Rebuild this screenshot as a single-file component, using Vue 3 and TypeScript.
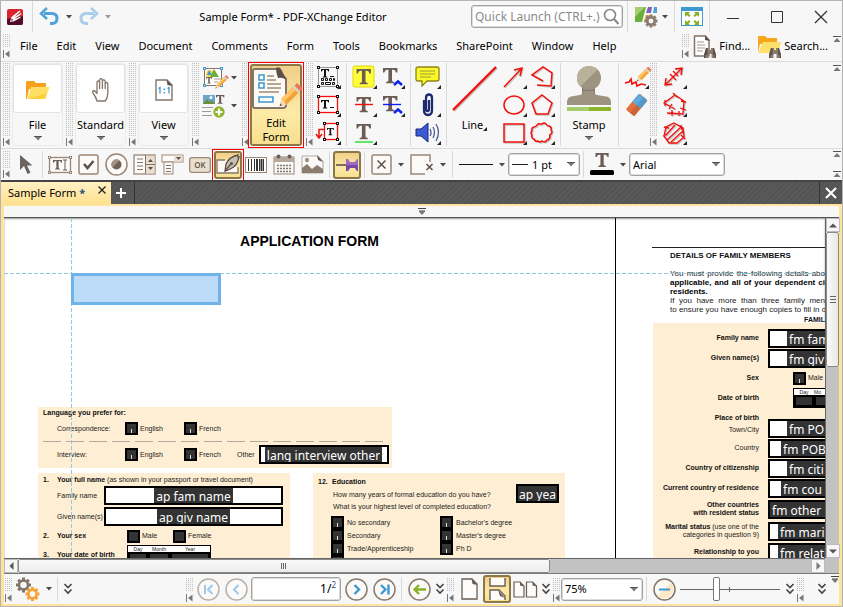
<script setup lang="ts">
import { h, ref } from 'vue'

type Glyph = [number, number, string]

const T = (x: number, y: number, s: number, c = '#6b5d55') =>
  `<path transform="translate(${x} ${y}) scale(${s})" fill="${c}" d="M0 0h16v5h-1.500q-.5-3-3-3h-1.500v12q0 1.500 2.500 1.500v1.500h-9v-1.500q2.500 0 2.500-1.500v-12h-1.500q-2.500 0-3 3h-1.500z"/>`
const corners = (x: number, y: number, X: number, Y: number, c = '#111') =>
  [[x, y], [X, y], [x, Y], [X, Y]].map(p => `<rect x="${p[0] - 1}" y="${p[1] - 1}" width="2" height="2" fill="#fff" stroke="${c}"/>`).join('')
const binoculars = (x: number, y: number) =>
  `<g transform="translate(${x} ${y})"><path fill="#8b7c70" d="M2 1h3v2h2v-2h3l2 7v3h-4.500v-4h-3v4h-4.500v-3z"/><path fill="#5d5048" d="M2 1h1.500v7h-2v3h-1.500v-3zM10 1h-1v7h1.500v3h1.500v-3z"/></g>`
const pencil = (t: string) =>
  `<g transform="${t}"><path fill="#f7a236" d="M4 0h5v14h-5z"/><path fill="#ffc766" d="M4 0h2.500v14h-2.500z"/><path fill="#e77a55" d="M4-4h5v3h-5z"/><path fill="#d8d3cc" d="M4-1h5v2h-5z"/><path fill="#f2dcae" d="M4 14h5l-2.500 5z"/><path fill="#7a5a3c" d="M5.600 17h1.800l-.9 2z"/></g>`
const gear = (x: number, y: number, r: number, c: string) => {
  let s = ''
  for (let a = 0; a < 360; a += 45) s += `<rect x="-1.500" y="${-r}" width="3" height="4" transform="rotate(${a})"/>`
  return `<g transform="translate(${x} ${y})" fill="${c}">${s}<circle r="${r * 0.6}" fill="none" stroke="${c}" stroke-width="${r * 0.34}"/></g>`
}
const box = '<rect x="1" y="1" width="19" height="19" rx="1.500" fill="#fbfaf8" stroke="#9b8776" stroke-width="1.500"/>'
const ring = (inner: string, c = '#8b7c6c') => `<circle cx="11.500" cy="11.500" r="10.500" fill="#fbfaf8" stroke="${c}" stroke-width="1.500"/>${inner}`
const red = (d: string, w = 1.5) =>
  `<path d="${d}" transform="translate(1 1)" fill="none" stroke="#000" stroke-opacity=".2" stroke-width="${w}"/><path d="${d}" fill="none" stroke="#f0100c" stroke-width="${w}"/>`

const glyphs: Record<string, Glyph> = {
  logo: [16, 16, '<rect width="16" height="16" rx="2" fill="#d9252c"/><path fill="#4f0b28" d="M0 10l16-3v7q0 2-2 2h-12q-2 0-2-2z"/><path fill="#fff" d="M3 13l1.500-5 8-6.500 1 1-7 6 7.500-4.500.5 1-7 5 6-2.500v1.200l-6.500 3.500z"/><path fill="#7b1530" d="M4.800 9.500l1.500 1.600-2.300 1z"/>'],
  undo: [21, 19, '<path d="M5 6.500h8q5 0 5 5t-5 5h-2" fill="none" stroke="#4ea3d8" stroke-width="3"/><path d="M8 1l-6 5.500 6 5.500" fill="none" stroke="#4ea3d8" stroke-width="2.500"/>'],
  redo: [21, 19, '<path d="M16 6.500h-8q-5 0-5 5t5 5h2" fill="none" stroke="#a9cdea" stroke-width="3"/><path d="M13 1l6 5.500-6 5.500" fill="none" stroke="#a9cdea" stroke-width="2.500"/>'],
  drop: [6, 4, '<path d="M0 0h6l-3 3.500z" fill="#4a4a4a"/>'],
  dropGrey: [6, 4, '<path d="M0 0h6l-3 3.500z" fill="#9a9a9a"/>'],
  wideDrop: [8, 5, '<path d="M.5 .5h7l-3.500 4z" fill="#777"/><path d="M0 .5h8" stroke="#555"/>'],
  gripEnd: [7, 8, '<path d="M.5 0v8" stroke="#777"/><path d="M6.500 .5v7l-4.500-3.500z" fill="#777"/>'],
  up: [8, 7, '<path d="M0 .5h8" stroke="#555"/><path d="M4 2l3.500 4h-7z" fill="#777"/>'],
  down: [8, 7, '<path d="M0 .5h8M1 3h6" stroke="#444"/><path d="M4 7l3.500-4h-7z" fill="#777"/>'],
  magnifier: [16, 17, '<circle cx="7" cy="7" r="5.500" fill="none" stroke="#888" stroke-width="1.600"/><path d="M11 11l4.500 5" stroke="#888" stroke-width="2"/>'],
  layout: [24, 22, '<path fill="#6aae3c" d="M1 1h11l-4 15h-7z"/><path fill="#a6cf6d" d="M1 1h10l-10 10z"/><path fill="#8060b0" d="M14 1h4l-1 6h-5z"/><path fill="#4ea3d8" d="M20 1h3v6h-4z"/><path fill="#f7a82e" d="M12 9h4l-2 7h-4z"/>' + gear(17, 15, 6.5, '#8b7c70')],
  full: [22, 19, '<rect x=".5" y=".5" width="21" height="18" fill="#fff" stroke="#3f98d0"/><path fill="#3f98d0" d="M0 0h22v4h-22z"/><path fill="#84b320" d="M4 5h5l-1.500 1.500 2 2-1.500 1.500-2-2-2 2zM18 5h-5l1.500 1.500-2 2 1.500 1.500 2-2 2 2zM4 18h5l-1.500-1.500 2-2-1.500-1.500-2 2-2-2zM18 18h-5l1.500-1.500-2-2 1.500-1.500 2 2 2-2z"/>'],
  min: [12, 12, '<path d="M0 7.500h12" stroke="#333"/>'],
  max: [12, 12, '<path d="M.5.5h11v11h-11z" fill="none" stroke="#333"/>'],
  close: [12, 12, '<path d="M0 0l12 12M12 0l-12 12" stroke="#333" stroke-width="1.300"/>'],
  find: [23, 23, '<path d="M1.500 1h10.500l4 4v16h-14.500z" fill="#fff" stroke="#83756a" stroke-width="1.500"/><path fill="#5d5048" d="M12 0l5 6-5-1z"/><path d="M4 7h7M4 10h8M4 13h8M4 16h6" stroke="#a39990"/>' + binoculars(11, 12)],
  search: [23, 23, '<path fill="#f8a61c" d="M0 2q0-1 1-1h6l2 2h10v6h-17l-2 8z"/><path fill="#ffdf6b" d="M5 7h18l-3 11h-20z"/>' + binoculars(11, 12)],
  folder: [24, 20, '<path fill="#f8a01c" d="M0 2q0-1 1-1h7l2 2h10v6h-17l-2 10q-1 0-1-1z"/><path fill="#ffe066" d="M5 7h18.500l-4 12h-18z"/><path fill="#ffcf3a" d="M1.500 19l19-6-2 6z"/>'],
  hand: [20, 26, '<path d="M6 24q-1-4-4-8-1-2 .5-2.500 1.500 0 3.500 3v-11q0-1.500 1.300-1.500t1.300 1.500v6-8q0-1.800 1.400-1.800t1.400 1.800v8-7q0-1.600 1.400-1.600t1.400 1.600v7-4.500q0-1.500 1.300-1.500t1.300 1.500v9q0 5-2.500 8z" fill="#fff" stroke="#83756a" stroke-width="1.300" stroke-linejoin="round"/>'],
  oneToOne: [18, 22, '<path d="M1 1h11l5 5v15h-16z" fill="#fff" stroke="#83756a" stroke-width="1.400"/><path fill="#5d5048" d="M11.500.5l6 6.500-5-1z"/><path d="M3.500 9.500l1.500-1v6M12.500 9.500l1.500-1v6" fill="none" stroke="#3f98d0" stroke-width="1.300"/><path fill="#3f98d0" d="M8.500 9.500h1.500v1.500h-1.500zM8.500 13h1.500v1.500h-1.500z"/>'],
  editContent: [24, 24, '<rect x="2.500" y="2.500" width="17" height="17" fill="#fff" stroke="#83756a"/><circle cx="8" cy="8" r="4" fill="#ffd34d"/><path fill="#6aae3c" d="M12 3l5 8h-9z"/><path fill="#3f98d0" d="M7 4l3 5h-5z"/>' + T(4, 11, .38) + '<path d="M12 13h7M12 16h4" stroke="#a39990"/>' + corners(2.5, 2.5, 19.5, 19.5, '#3f98d0') + pencil('translate(20 9) rotate(45) scale(.75)')],
  addContent: [24, 24, '<path fill="#6aa5d0" d="M1 1h12v9h-12z"/><path fill="#6a8f3a" d="M1 10l4-5 3 3 2-2 3 4z"/><circle cx="9" cy="3.500" r="1.500" fill="#fff"/>' + T(14, 1, .52) + '<path d="M0 13.500h11M0 17.500h9M0 21.500h10" stroke="#a39990"/><circle cx="17" cy="18" r="5.700" fill="#8db52c"/><path d="M17 14.500v7M13.500 18h7" stroke="#fff" stroke-width="2"/>'],
  editForm: [48, 46, '<path d="M3 3h22l9 10v26q0 3-3 3h-28q-2 0-2-2v-35q0-2 2-2z" fill="#fdfaf4" stroke="#83756a" stroke-width="2"/><path fill="#5d5048" d="M24 2q3-2 5 1l6 12q-3-4-9-3-2-5-2-10z"/><g fill="#fff" stroke="#4299d4" stroke-width="1.600"><path d="M7 9h5v5h-5zM7 17h5v5h-5zM7 31h14v5h-14z"/></g><path d="M15 10h7M15 14h9M15 18h14M15 22h14M7 26h20" stroke="#a0897a" stroke-width="1.700"/>' + pencil('translate(37 16) rotate(45) scale(1.600 1.250)')],
  textBlocks: [24, 24, '<rect x="2.500" y="2.500" width="19" height="19" fill="none" stroke="#333" stroke-dasharray="1 1"/>' + T(5, 4, .5, '#111') + '<path d="M14 11.500h4" stroke="#111"/><g fill="none" stroke="#111"><path d="M5.500 13.500h2v2h-2zM9.500 13.500h2v2h-2zM13.500 13.500h2v2h-2zM17.500 13.500h1v2h-1zM5.500 17.500h2v2h-2zM9.500 17.500h5v2h-5zM16.500 17.500h2v2h-2z"/></g>' + corners(2.5, 2.5, 21.5, 21.5)],
  textBox: [24, 24, '<rect x="2.500" y="3.500" width="19" height="16" fill="#fff" stroke="#f0100c" stroke-width="1.300"/>' + T(5, 7, .5, '#111') + '<path d="M14 14.500h4" stroke="#111"/>' + corners(2.5, 3.5, 21.5, 19.5)],
  callout: [24, 24, '<rect x="8.500" y="2.500" width="13" height="16" fill="#fff" stroke="#f0100c" stroke-width="1.300"/>' + T(11, 7, .42, '#111') + '<path d="M8 8.500h-5v8M0 13l3 4 3-4" fill="none" stroke="#f0100c" stroke-width="1.500"/>' + corners(8.5, 2.5, 21.5, 18.5)],
  highlight: [24, 24, '<rect x="1" y="1" width="21" height="21" rx="2" fill="#ffff3c" stroke="#e5d400"/>' + T(4.5, 4, .9)],
  strike: [24, 24, T(4.5, 4, .9) + '<path d="M3 11.500h18" stroke="#f0100c" stroke-width="1.400"/>'],
  underline: [24, 24, T(4.5, 3, .9) + '<path d="M3 21h18" stroke="#1fdf2a" stroke-width="1.400"/>'],
  insertT: [24, 24, T(3, 3, .9) + '<path d="M14 20l4-3.500 4 3.500" fill="none" stroke="#1020ee" stroke-width="2.500"/>'],
  replaceT: [24, 24, T(3, 3, .9) + '<path d="M3 11.500h18" stroke="#1020ee" stroke-width="1.400"/><path d="M14 20l4-3.500 4 3.500" fill="none" stroke="#1020ee" stroke-width="2.500"/>'],
  note: [26, 24, '<path d="M3 2h19q2 0 2 2v10q0 2-2 2h-10l-5 5v-5h-4q-2 0-2-2v-10q0-2 2-2z" fill="#fbf72a" stroke="#8d8418" stroke-width="1.300"/><path d="M5 6h15M5 9h15M5 12h11" stroke="#9a9a30"/>'],
  clip: [14, 25, '<path d="M3 7v10q0 5 4 5t4-5v-12q0-3.500-3-3.500t-3 3.500v11q0 2 1.500 2t1.500-2v-9" fill="none" stroke="#1c2a72" stroke-width="2.300"/>'],
  sound: [26, 22, '<path d="M1 7h5l7-6v19l-7-6h-5z" fill="#3b5bd6" stroke="#1c2a72"/><path d="M15 7q2 4 0 7M18 5q3 5 0 11M21 2q5 8 0 17" fill="none" stroke="#4a5a98" stroke-width="1.300"/>'],
  lineBig: [48, 48, red('M2 45L45 2', 2.4)],
  arrow: [24, 24, red('M2 22L19 4M12 5l8-2-2 8')],
  polyline: [24, 24, red('M13 16L2 10L13 2L22 8L21 21L7 20')],
  oval: [24, 24, '<ellipse cx="12" cy="12" rx="10" ry="9" fill="none" stroke="#f0100c" stroke-width="1.500"/>'],
  pentagon: [24, 24, red('M12 2l10 8-4 11h-12l-4-11z')],
  rect: [24, 24, red('M2 3h20v18h-20z')],
  cloud: [24, 24, red('M12 3q2-2 4 0 1 2 3 2 3 1 2 4 2 2 0 4-2 1-1 3-1 3-3 3-2 3-5 1-2 2-4 0-3 1-4-2-3-1-2-4-2-2 0-4-1-3 2-4 2 0 3-2 2-2 3-1z')],
  stamp: [48, 48, '<path fill="#8b7c70" d="M17 20h13v12h-13z"/><circle cx="24" cy="13" r="12" fill="#9c9480"/><path fill="#b9b29b" d="M15.500 21.500a12 12 0 0 1 17-17z"/><path fill="#9c9480" d="M2 40v-3q0-6 7-6l6-1q3-1 3-4h11q0 3 3 4l6 1q8 0 8 6v3z"/><path fill="#a6cb6d" d="M2 42h44v4h-44z"/><path fill="#8db52c" d="M24 42h22v4h-22z"/>'],
  pencilMark: [24, 24, '<path d="M1 18l4-1 2-3 1 5 4-2 1 4 4-2 5 1" fill="none" stroke="#f0100c" stroke-width="1.600"/>' + pencil('translate(19 1) rotate(45) scale(1 .8)')],
  eraser: [24, 24, '<g transform="rotate(40 12 12)"><rect x="7" y="1" width="11" height="21" rx="1.500" fill="#e2703c"/><path d="M7 12h11v-9q0-2-2-2h-7q-2 0-2 2z" fill="#5fa9dc"/><path fill="#000" opacity=".1" d="M12.500 1h5.500v21h-5.500z"/></g>'],
  measure: [24, 24, red('M4 19L19 4M13 4l7-1-1 7M4 13l-1 7 7-1M8 9l6 6M11 6l5 5', 1.4)],
  perimeter: [24, 24, red('M13 16L2 10L13 2L22 8L21 21L5 20M10 17v6M18 15l6 2M19 8l5 1M11 0l4 4M3 7l0 6M10 11l-3 5M17 18v5', 1.3)],
  area: [24, 24, red('M12 2l9 5 1 9-7 6h-8l-5-7 2-9zM4 14l9-10M5 19l14-13M9 21l12-11M2 6l5 1M19 4l1 5M1 15l4-2M19 14l4 4', 1.3)],
  cursor: [14, 21, '<path d="M1 1v15l4-4 3.500 8 3-1.500-3.500-7h5.500z" fill="#6b6560"/>'],
  textField: [24, 18, '<rect x="1.500" y="1.500" width="21" height="15" fill="#fbfaf8" stroke="#9b8776" stroke-width="1.300"/>' + T(5, 4, .56) + '<path d="M15 4h4M15 14h4M17 4v10" stroke="#6b5d55"/>' + corners(1.5, 1.5, 22.5, 16.5, '#9b8776')],
  check: [21, 21, box + '<path d="M6 10l3.500 4 6-7" fill="none" stroke="#5d5048" stroke-width="2.500"/>'],
  radio: [23, 23, ring('<circle cx="11.500" cy="11.500" r="5" fill="#6f6156"/><path d="M7.500 14.500a5 5 0 0 1 7-7z" fill="#a39284"/>', '#9b8776')],
  list: [23, 21, '<rect x="1" y="1" width="21" height="19" fill="#fbfaf8" stroke="#9b8776" stroke-width="1.300"/><path fill="#e9dfce" d="M13 2h8.500v17.500h-8.500z"/><path d="M12.500 1v19M13 10.500h9M4 5h6M4 8.500h6M4 12h6M4 15.500h6" stroke="#83756a"/><path d="M17.500 5l2.500 3h-5zM17.500 16l2.500-3h-5z" fill="#5d5048"/>'],
  combo: [23, 21, '<rect x="1" y="1" width="21" height="7" fill="#fbfaf8" stroke="#9b8776"/><path fill="#e9dfce" d="M13 1.500h8.500v6h-8.500z"/><path d="M15 3h5l-2.500 3z" fill="#5d5048"/><rect x="3" y="8" width="9" height="12" fill="#fbfaf8" stroke="#9b8776"/><path d="M5 11.500h5M5 14.500h5M5 17.500h5" stroke="#83756a"/>'],
  ok: [22, 16, '<rect x=".7" y=".7" width="20.600" height="14.600" rx="2" fill="#e9dfce" stroke="#9b8776" stroke-width="1.300"/><text x="11" y="11" text-anchor="middle" font-family="Open Sans, sans-serif" font-weight="600" font-size="8" fill="#5d5048">OK</text>'],
  sign: [24, 20, '<path d="M9 5h-8v13h21v-6" fill="#fdfaf4" stroke="#83756a" stroke-width="1.300"/><path d="M9 16l1-7q3-7 12-9-1 3 1 2-2 9-7 11-3 2-7 3z" fill="#c7bfb0" stroke="#5d5048" stroke-width="1.300"/><path d="M9 16l6-7" stroke="#5d5048" stroke-width="1.300"/><circle cx="15.500" cy="8.500" r="1.500" fill="#5d5048"/>'],
  barcode: [22, 16, '<rect x=".5" y=".5" width="21" height="15" fill="#fff" stroke="#9b8776"/><path d="M3.500 2v12M6.500 2v12M9.500 2v12M14.500 2v12M18.500 2v12" stroke="#333"/><path d="M12 2v12M16.500 2v12" stroke="#333" stroke-width="2"/>'],
  date: [22, 21, '<rect x="1" y="3" width="20" height="17" fill="#fbfaf8" stroke="#9b8776"/><path fill="#b5a89a" d="M1 3h20v5h-20z"/><circle cx="5.500" cy="2.500" r="2" fill="#6b5d55"/><circle cx="16.500" cy="2.500" r="2" fill="#6b5d55"/><path d="M4 11.500h14M4 14.500h14M4 17.500h14" stroke="#83756a" stroke-width="1.600" stroke-dasharray="2 1"/>'],
  picture: [23, 19, '<path fill="#fbfaf8" stroke="#b5a89a" d="M1 1h16l5 5v12h-21z"/><path fill="#5d5048" d="M16 0l6 7-5-2z"/><path fill="#8b7c70" d="M1 18v-5l5-4 5 5 5-4 6 4v4z"/><circle cx="6" cy="5" r="2.200" fill="#a39284"/>'],
  pin: [23, 14, '<path d="M0 7h12" stroke="#5d5048" stroke-width="1.600"/><path fill="#9b6cc0" d="M10 1h2l2 3h5l2-3h1v12h-1l-2-3h-5l-2 3h-2z"/><path fill="#7a4aa3" d="M10 7h12v6h-1l-2-3h-5l-2 3h-2z"/>'],
  boxX: [21, 21, box + '<path d="M6.500 6.500l8 8M14.500 6.500l-8 8" stroke="#5d5048" stroke-width="1.500"/>'],
  boxCornerX: [24, 21, '<path d="M15 20h-14v-19h19v7" fill="#fbfaf8" stroke="#9b8776" stroke-width="1.500"/><path d="M16.500 10l6 6M22.500 10l-6 6" stroke="#5d5048" stroke-width="1.500"/>'],
  stroke: [34, 3, '<path d="M0 1.500h34" stroke="#111"/>'],
  fontT: [24, 23, T(5.5, 0, .82) + '<rect y="17" width="24" height="5" rx="1.500" fill="#000"/>'],
  plus: [12, 12, '<path d="M6 1v10M1 6h10" stroke="#fff" stroke-width="2"/>'],
  closeWhite: [12, 12, '<path d="M1 1l10 10M11 1l-10 10" stroke="#fff" stroke-width="2"/>'],
  closeTab: [8, 8, '<path d="M.5.5l7 7M7.500.5l-7 7" stroke="#222" stroke-width="1.300"/>'],
  gears: [25, 25, gear(8.5, 8, 7.5, '#83756a') + gear(17.5, 17, 7, '#f7a236')],
  chevrons: [8, 12, '<path d="M.5 1l3.500 3.500 3.500-3.500M.5 6.500l3.500 3.500 3.500-3.500" fill="none" stroke="#444" stroke-width="1.600"/>'],
  first: [23, 23, ring('<path d="M8 7v9M15.500 7l-4.500 4.500 4.500 4.500" fill="none" stroke="#9cc9ec" stroke-width="2"/>', '#b8b0a8')],
  prev: [23, 23, ring('<path d="M13.500 7l-4.500 4.500 4.500 4.500" fill="none" stroke="#9cc9ec" stroke-width="2"/>', '#b8b0a8')],
  next: [23, 23, ring('<path d="M9.500 7l4.500 4.500-4.500 4.500" fill="none" stroke="#3f98d0" stroke-width="2.400"/>')],
  last: [23, 23, ring('<path d="M15.500 6.500v10M8 7l4.500 4.500-4.500 4.500" fill="none" stroke="#3f98d0" stroke-width="2.400"/>')],
  back: [23, 23, ring('<path d="M18 11.500h-11M11 7l-4.500 4.500 4.500 4.500" fill="none" stroke="#84b320" stroke-width="2.300"/>')],
  single: [17, 22, '<path d="M1 1h10l5 5v15h-15z" fill="#fdfcfa" stroke="#6b5d55" stroke-width="1.300"/><path fill="#6b5d55" d="M10.500.5l6 6.500-5-1z"/>'],
  continuous: [17, 24, '<path d="M1 1v8h15v-8M1 23v-10h9l6 6v4" fill="#fdfcfa" stroke="#6b5d55" stroke-width="1.400"/><path fill="#6b5d55" d="M9 13l7 8-5-2z"/>'],
  facing: [24, 17, '<path d="M1 1h6l4 4v11h-10zM13.500 1h6l4 4v11h-10z" fill="#fdfcfa" stroke="#6b5d55" stroke-width="1.200"/><path fill="#6b5d55" d="M7 .5l4 5-4-1zM19.500.5l4 5-4-1z"/>'],
  zoomOut: [23, 23, '<circle cx="11.500" cy="11.500" r="10.500" fill="#fbf9f4" stroke="#83756a" stroke-width="1.500"/><path fill="#fde8c4" d="M4.500 18.500l14-14a10 10 0 0 1-14 14z"/><path d="M6 11.500h11" stroke="#3f98d0" stroke-width="2"/>'],
  triL: [5, 8, '<path d="M4.500 0v8l-4-4z" fill="#555"/>'],
  triR: [5, 8, '<path d="M.5 0v8l4-4z" fill="#777"/>'],
  triU: [8, 5, '<path d="M0 4.500h8l-4-4z" fill="#555"/>'],
  triD: [8, 5, '<path d="M0 .5h8l-4 4z" fill="#555"/>'],
}

const Icon = (p: { n: string }) => {
  const g = glyphs[p.n]
  return h('svg', { width: g[0], height: g[1], viewBox: `0 0 ${g[0]} ${g[1]}`, 'aria-hidden': 'true', innerHTML: g[2] })
}
Icon.props = ['n']

const menus = ['File', 'Edit', 'View', 'Document', 'Comments', 'Form', 'Tools', 'Bookmarks', 'SharePoint', 'Window', 'Help']
const panels = [
  { label: 'File', icon: 'folder' },
  { label: 'Standard', icon: 'hand' },
  { label: 'View', icon: 'oneToOne' },
]
const textTools = ['textBlocks', 'textBox', 'callout']
const markupTools = ['highlight', 'strike', 'underline', 'insertT', 'replaceT']
const commentTools = ['note', 'clip', 'sound']
const shapeTools = ['arrow', 'oval', 'rect', 'polyline', 'pentagon', 'cloud']
const measureTools = ['measure', 'perimeter', 'area']
const formTools = ['textField', 'check', 'radio', 'list', 'combo', 'ok', 'sign', 'barcode', 'date', 'picture']

const query = ref('')
const pageNo = ref('1')
const zoom = ref('75%')
const lineWidth = ref('1 pt')
const fontName = ref('Arial')
const slider = ref(36)

const languages = [
  { label: 'Correspondence:', other: '' },
  { label: 'Interview:', other: 'lang interview other' },
]
const education = [
  ['No secondary', "Bachelor's degree"],
  ['Secondary', "Master's degree"],
  ['Trade/Apprenticeship', 'Ph D'],
]
const familyRows = [
  { a: 'Place of birth', b2: 'Town/City', value: 'fm PO', pad: 'wide', kind: 'place' },
  { b: 'Country', value: 'fm POB', pad: 'mid' },
  { a: 'Country of citizenship', value: 'fm citi', pad: 'wide' },
  { a: 'Current country of residence', value: 'fm cou', pad: 'mid' },
  { a: 'Other countries', a2: 'with resident status', value: 'fm other', pad: 'none' },
  { a: 'Marital status', b: ' (use one of the', b2: 'categories in question 9)', value: 'fm mari', pad: 'thin' },
  { a: 'Relationship to you', value: 'fm relati', pad: 'thin' },
]
</script>

<template>
  <div class="app">
    <header class="title-bar">
      <Icon n="logo" />
      <span class="sep"></span>
      <button class="plain" aria-label="Undo"><Icon n="undo" /></button>
      <button class="plain dd" aria-label="Undo list"><Icon n="drop" /></button>
      <button class="plain" aria-label="Redo"><Icon n="redo" /></button>
      <button class="plain dd" aria-label="Redo list"><Icon n="dropGrey" /></button>
      <h1>Sample Form* - PDF-XChange Editor</h1>
      <label class="quick">
        <input v-model="query" aria-label="Quick Launch" placeholder="Quick Launch (CTRL+.)" />
        <Icon n="magnifier" />
      </label>
      <span class="sep"></span>
      <button class="plain" aria-label="UI options"><Icon n="layout" /></button>
      <button class="plain" aria-label="UI options list"><Icon n="drop" /></button>
      <span class="sep"></span>
      <button class="plain" aria-label="Full screen"><Icon n="full" /></button>
      <span class="sep"></span>
      <div class="win">
        <button class="plain" aria-label="Minimize"><Icon n="min" /></button>
        <button class="plain" aria-label="Maximize"><Icon n="max" /></button>
        <button class="plain" aria-label="Close"><Icon n="close" /></button>
      </div>
    </header>

    <div class="menu-bar">
      <div class="grip"><i></i><Icon n="gripEnd" /></div>
      <nav>
        <button v-for="m in menus" :key="m" class="plain">{{ m }}</button>
      </nav>
      <div class="grip"><i></i><Icon n="gripEnd" /></div>
      <button class="plain find"><Icon n="find" />Find...</button>
      <button class="plain find"><Icon n="search" />Search...</button>
      <div class="edge"><Icon n="up" /></div>
    </div>

    <div class="ribbon">
      <template v-for="p in panels" :key="p.label">
        <div class="grip"><i></i><Icon n="gripEnd" /></div>
        <button class="panel plain">
          <span class="tile"><Icon :n="p.icon" /></span>
          <span>{{ p.label }}</span>
          <Icon n="wideDrop" />
        </button>
      </template>
      <div class="grip"><i></i><Icon n="gripEnd" /></div>
      <div class="content-tools">
        <button class="plain" aria-label="Edit content"><Icon n="editContent" /><Icon n="drop" /></button>
        <button class="plain" aria-label="Add content"><Icon n="addContent" /><Icon n="drop" /></button>
      </div>
      <div class="grip"><i></i><Icon n="gripEnd" /></div>
      <div class="marked">
        <button class="active big"><Icon n="editForm" /><span>Edit<br />Form</span></button>
      </div>
      <div class="grip"><i></i><Icon n="gripEnd" /></div>
      <div class="cells"><button v-for="t in textTools" :key="t" class="cell" :aria-label="t"><Icon :n="t" /></button></div>
      <span class="sep"></span>
      <div class="cells"><button v-for="t in markupTools" :key="t" class="cell" :aria-label="t"><Icon :n="t" /></button></div>
      <span class="sep"></span>
      <div class="cells"><button v-for="t in commentTools" :key="t" class="cell" :aria-label="t"><Icon :n="t" /></button></div>
      <span class="sep"></span>
      <button class="plain large fly"><Icon n="lineBig" /><span>Line</span></button>
      <div class="cells"><button v-for="t in shapeTools" :key="t" class="cell" :aria-label="t"><Icon :n="t" /></button></div>
      <span class="sep"></span>
      <button class="plain large"><Icon n="stamp" /><span>Stamp</span><Icon n="wideDrop" /></button>
      <span class="sep"></span>
      <div class="cells">
        <button class="cell" aria-label="Pencil"><Icon n="pencilMark" /></button>
        <button class="cell bare" aria-label="Eraser"><Icon n="eraser" /></button>
      </div>
      <div class="grip"><i></i><Icon n="gripEnd" /></div>
      <div class="cells"><button v-for="t in measureTools" :key="t" class="cell" :aria-label="t"><Icon :n="t" /></button></div>
      <div class="edge"><Icon n="up" /></div>
    </div>

    <div class="form-bar">
      <div class="grip"><i></i><Icon n="gripEnd" /></div>
      <button class="plain select-tool" aria-label="Select"><Icon n="cursor" /></button>
      <span class="sep"></span>
      <template v-for="t in formTools" :key="t">
        <div v-if="t === 'sign'" class="marked small"><button class="active slot" aria-label="Signature"><Icon n="sign" /></button></div>
        <button v-else class="plain slot" :aria-label="t"><Icon :n="t" /></button>
      </template>
      <span class="sep"></span>
      <button class="active slot" aria-label="Keep tool selected"><Icon n="pin" /></button>
      <span class="sep"></span>
      <button class="plain pair" aria-label="Fill color"><Icon n="boxX" /><Icon n="drop" /></button>
      <button class="plain pair" aria-label="Border color"><Icon n="boxCornerX" /><Icon n="drop" /></button>
      <span class="sep"></span>
      <button class="plain pair" aria-label="Border style"><Icon n="stroke" /><Icon n="drop" /></button>
      <label class="drop-box width-box">
        <span class="dash"></span>
        <select v-model="lineWidth" aria-label="Border width"><option>1 pt</option><option>2 pt</option></select>
        <Icon n="wideDrop" />
      </label>
      <span class="sep"></span>
      <button class="plain pair" aria-label="Text color"><Icon n="fontT" /><Icon n="drop" /></button>
      <label class="drop-box font-box">
        <select v-model="fontName" aria-label="Font"><option>Arial</option><option>Courier</option></select>
        <Icon n="wideDrop" />
      </label>
      <div class="edge"><Icon n="up" /><Icon n="up" /></div>
    </div>

    <div class="tabs">
      <div class="tab"><span>Sample Form <b>*</b></span><button class="plain" aria-label="Close tab"><Icon n="closeTab" /></button></div>
      <button class="plain add" aria-label="New tab"><Icon n="plus" /></button>
      <button class="plain close-all" aria-label="Close document"><Icon n="closeWhite" /></button>
    </div>

    <div class="frame">
      <div class="split"><Icon n="down" /></div>
      <div class="work">
        <main class="doc">
          <article class="sheet one">
            <h2>APPLICATION FORM</h2>
            <section class="card language">
              <h3>Language you prefer for:</h3>
              <div v-for="(l, i) in languages" :key="l.label" class="lang-row">
                <span class="lang">{{ l.label }}</span>
                <label class="opt"><input type="checkbox" :name="'en' + i" />English</label>
                <label class="opt"><input type="checkbox" :name="'fr' + i" />French</label>
                <label v-if="l.other" class="other">Other <span class="field mid"><input :value="l.other" /></span></label>
              </div>
            </section>
            <div class="two">
              <section class="card">
                <p class="num"><b>1.</b><span><b>Your full name</b> (as shown in your passport or travel document)</span></p>
                <label class="name"><span>Family name</span><span class="field mid"><input value="ap fam name" /></span></label>
                <label class="name"><span>Given name(s)</span><span class="field mid"><input value="ap giv name" /></span></label>
                <div class="num sex">
                  <b>2.</b><b class="q">Your sex</b>
                  <label class="opt blank"><input type="checkbox" name="male" />Male</label>
                  <label class="opt blank"><input type="checkbox" name="female" />Female</label>
                </div>
                <div class="num birth">
                  <b>3.</b><b class="q">Your date of birth</b>
                  <div class="dob"><span>Day</span><span>Month</span><span>Year</span><input aria-label="Day" /><input aria-label="Month" /><input aria-label="Year" /></div>
                </div>
              </section>
              <section class="card edu">
                <h3><span>12.</span>Education</h3>
                <div class="years">
                  <div><p>How many years of formal education do you have?</p><p>What is your highest level of completed education?</p></div>
                  <span class="field"><input value="ap yea" aria-label="Years of education" /></span>
                </div>
                <div class="levels">
                  <template v-for="r in education" :key="r[0]">
                    <label v-for="c in r" :key="c" class="opt"><input type="checkbox" :name="c" />{{ c }}</label>
                  </template>
                  <span class="opt"><input type="checkbox" aria-label="None" /></span>
                </div>
              </section>
            </div>
          </article>

          <article class="sheet second">
            <hr />
            <h3>DETAILS OF FAMILY MEMBERS</h3>
            <div class="para">
              <p>You must provide the following details abo</p>
              <p class="strong">applicable, and all of your dependent ci</p>
              <p class="strong start">residents.</p>
              <p>If you have more than three family men</p>
              <p>to ensure you have enough copies to fill in d</p>
            </div>
            <h4>FAMIL</h4>
            <section class="family">
              <div class="row"><span class="lab"><b>Family name</b></span><span class="field wide"><input value="fm fam" aria-label="Family name" /></span></div>
              <div class="row"><span class="lab"><b>Given name(s)</b></span><span class="field wide"><input value="fm giv" aria-label="Given names" /></span></div>
              <div class="row in"><span class="lab"><b>Sex</b></span><label class="opt"><input type="checkbox" name="fmMale" />Male</label></div>
              <div class="row in"><span class="lab"><b>Date of birth</b></span><div class="dob"><span>Day</span><span class="cut">Mo</span><span></span><input aria-label="Day" /><input aria-label="Month" /><input aria-label="Year" /></div></div>
              <div v-for="r in familyRows" :key="(r.a || '') + (r.b || '')" class="row" :class="r.kind">
                <span class="lab"><b v-if="r.a">{{ r.a }}</b>{{ r.b }}<template v-if="r.a2 || r.b2"><br /><b>{{ r.a2 }}</b>{{ r.b2 }}</template></span>
                <span class="field" :class="r.pad"><input :value="r.value" :aria-label="r.a || r.b" /></span>
              </div>
            </section>
          </article>
          <div class="guide-v"></div>
          <div class="guide-h"></div>
          <div class="placing"></div>
        </main>
        <div class="vbar">
          <button aria-label="Scroll up"><Icon n="triU" /></button>
          <span class="thumb"></span>
          <span class="track"></span>
          <button aria-label="Scroll down"><Icon n="triD" /></button>
        </div>
        <div class="hbar">
          <button aria-label="Scroll left"><Icon n="triL" /></button>
          <span class="thumb"></span>
          <span class="track"></span>
          <button aria-label="Scroll right"><Icon n="triR" /></button>
        </div>
        <div class="track"></div>
      </div>

      <footer class="status">
        <div class="grip"><i></i><Icon n="gripEnd" /></div>
        <button class="plain pair" aria-label="Options"><Icon n="gears" /><Icon n="drop" /></button>
        <span class="sep"></span>
        <button class="plain more" aria-label="More options"><Icon n="chevrons" /></button>
        <span class="space"></span>
        <div class="grip"><i></i><Icon n="gripEnd" /></div>
        <button class="plain nav" aria-label="First page"><Icon n="first" /></button>
        <button class="plain nav" aria-label="Previous page"><Icon n="prev" /></button>
        <label class="page-box"><input v-model="pageNo" aria-label="Page" /><span>/<sup>2</sup></span></label>
        <button class="plain nav" aria-label="Next page"><Icon n="next" /></button>
        <button class="plain nav" aria-label="Last page"><Icon n="last" /></button>
        <span class="sep"></span>
        <button class="plain nav" aria-label="Previous view"><Icon n="back" /></button>
        <button class="plain more" aria-label="More navigation"><Icon n="chevrons" /></button>
        <div class="grip"><i></i><Icon n="gripEnd" /></div>
        <button class="plain slot" aria-label="Single page"><Icon n="single" /></button>
        <button class="active slot" aria-label="Continuous"><Icon n="continuous" /></button>
        <button class="plain slot" aria-label="Two pages"><Icon n="facing" /></button>
        <button class="plain more" aria-label="More layouts"><Icon n="chevrons" /></button>
        <div class="grip"><i></i><Icon n="gripEnd" /></div>
        <label class="drop-box zoom-box">
          <select v-model="zoom" aria-label="Zoom"><option>75%</option><option>100%</option></select>
          <Icon n="wideDrop" />
        </label>
        <span class="sep"></span>
        <button class="plain nav" aria-label="Zoom out"><Icon n="zoomOut" /></button>
        <input v-model="slider" class="slider" type="range" aria-label="Zoom level" />
        <button class="plain more" aria-label="More zoom"><Icon n="chevrons" /></button>
        <div class="grip"><i></i><Icon n="gripEnd" /></div>
        <button class="plain last" aria-label="More tools"><Icon n="chevrons" /></button>
        <div class="edge"><Icon n="down" /></div>
      </footer>
    </div>
  </div>
</template>

<style>
html,
body {
  margin: 0;
}
</style>

<style scoped>
* {
  box-sizing: border-box;
}
.app {
  display: flex;
  flex-direction: column;
  height: 100vh;
  overflow: hidden;
  border: 1px solid #b4b4b4;
  background: #f7f7f7;
  color: #000;
  font: 11px/16px "Noto Sans", "Open Sans", sans-serif;
}
svg {
  display: block;
  flex: none;
  overflow: visible;
}
button,
input,
select {
  font: inherit;
  color: inherit;
  margin: 0;
}
.plain,
.cell {
  padding: 0;
  border: 0;
  background: none;
  white-space: nowrap;
}
.sep {
  flex: none;
  width: 1px;
  align-self: stretch;
  background: #d9d9d9;
}
.grip {
  flex: none;
  display: flex;
  flex-direction: column;
  gap: 2px;
  width: 8px;
  align-self: stretch;
}
.grip i {
  flex: 1;
  width: 7px;
  background: conic-gradient(from 270deg at 1px 1px, #c0c0c0 25%, transparent 0) 0 0 / 2px 2px;
}
.edge {
  flex: none;
  display: flex;
  flex-direction: column;
  justify-content: space-between;
  align-self: stretch;
  margin-left: auto;
  padding: 2px 1px 2px 0;
}

.title-bar {
  flex: none;
  display: flex;
  align-items: center;
  height: 31px;
  padding-left: 6px;
}
.title-bar > .plain {
  padding: 0 2px;
}
.title-bar > .sep {
  margin: 0 4px;
}
.title-bar > .sep:nth-child(2) {
  margin: 0 4px 0 9px;
}
.title-bar > .dd {
  width: 14px;
  padding: 0 4px;
}
h1 {
  flex: 1;
  margin: 0;
  font-size: 11px;
  font-weight: 400;
  text-align: center;
  white-space: nowrap;
}
.quick {
  display: flex;
  align-items: center;
  width: 152px;
  height: 23px;
  padding: 0 3px;
  border: 1px solid #a2a2a2;
  border-radius: 3px;
  background: #fff;
  box-shadow: inset 0 0 0 1px #dcdcdc;
  font-size: 12px;
}
.quick input {
  flex: 1;
  min-width: 0;
  padding: 0;
  border: 0;
  outline: 0;
  background: none;
}
.quick input::placeholder {
  color: #8a8a8a;
  opacity: 1;
}
.win {
  display: flex;
  gap: 32px;
  padding: 0 15px 0 13px;
}

.menu-bar {
  flex: none;
  display: flex;
  align-items: center;
  height: 30px;
  padding: 2px 0 3px 2px;
  border-bottom: 1px solid #dcdcdc;
}
nav {
  flex: 1;
  display: flex;
  gap: 19px;
  padding-left: 9px;
}
.find {
  display: flex;
  align-items: center;
  gap: 3px;
  padding: 0 5px 0 3px;
}

.ribbon {
  flex: none;
  display: flex;
  height: 87px;
  padding: 1px 0 2px 2px;
  border-bottom: 1px solid #dcdcdc;
}
.ribbon > .sep {
  margin: 0 3px 0 4px;
}
.panel {
  display: flex;
  flex-direction: column;
  align-items: center;
  width: 51px;
  margin: 0 3px 0 1px;
  border: 1px solid #ececec;
  border-radius: 3px;
}
.tile {
  display: grid;
  place-items: center;
  width: 49px;
  height: 49px;
  margin-bottom: 4px;
  border: 1px solid #e2e2e2;
  border-radius: 3px;
  background: #fff;
}
.panel svg:last-child {
  margin-top: 3px;
}
.content-tools {
  width: 38px;
  padding: 1px 0 0 2px;
}
.content-tools .plain {
  display: flex;
  align-items: center;
  gap: 5px;
  height: 28px;
}
.content-tools + .grip {
  margin-left: 4px;
}
.cells + .grip {
  margin-right: 2px;
}
.marked {
  flex: none;
  display: flex;
  width: 56px;
  margin: -1px 2px -2px -2px;
  padding: 1px;
  border: 1px solid #f00;
  background: #f7f7f7;
}
.active {
  display: flex;
  align-items: center;
  justify-content: center;
  padding: 0;
  border: 2px solid #8c7847;
  border-radius: 3px;
  background: linear-gradient(#f0cf8a, #fdeaa6 60%, #f6df8e);
}
.big {
  flex: 1;
  flex-direction: column;
  justify-content: space-between;
}
.big span {
  line-height: 14px;
}
.cells {
  flex: none;
  display: grid;
  grid-template-rows: repeat(3, 28px);
  grid-auto-flow: column;
  grid-auto-columns: 28px;
}
.cell {
  position: relative;
  display: grid;
  place-items: center;
}
.cell:not(.bare)::after,
.fly span::after {
  content: "";
  position: absolute;
  right: 1px;
  bottom: 2px;
  border: 2px solid;
  border-color: transparent #222 #222 transparent;
}
.large {
  display: flex;
  flex-direction: column;
  align-items: center;
  gap: 4px;
  width: 50px;
  padding-top: 2px;
}
.large svg + span {
  position: relative;
}
.large svg:last-child {
  margin-top: -1px;
}
.fly span {
  padding-right: 5px;
}

.form-bar {
  flex: none;
  display: flex;
  align-items: center;
  height: 31px;
  padding-left: 2px;
}
.form-bar .grip {
  padding: 2px 0;
}
.form-bar > .sep {
  margin: 2px 3px;
}
.select-tool {
  padding: 0 6px 0 8px;
}
.slot {
  flex: none;
  display: grid;
  place-items: center;
  width: 28px;
  height: 28px;
}
.small {
  width: 32px;
  margin: 0 -2px;
}
.pair {
  display: flex;
  align-items: center;
  gap: 6px;
}
.form-bar > .pair {
  padding: 0 3px;
}
.drop-box {
  display: flex;
  align-items: center;
  height: 23px;
  padding: 0 4px 0 3px;
  border: 1px solid #a2a2a2;
  border-radius: 3px;
  background: #fff;
  box-shadow: inset 0 0 0 1px #dcdcdc;
}
.drop-box select {
  flex: 1;
  min-width: 0;
  padding: 0;
  border: 0;
  background: none;
  appearance: none;
}
.dash {
  width: 16px;
  height: 1px;
  margin-right: 4px;
  background: #222;
}
.width-box {
  width: 72px;
}
.font-box {
  width: 96px;
}

.tabs {
  flex: none;
  display: flex;
  height: 24px;
  border-top: 2px solid #444;
  background: repeating-linear-gradient(135deg, #595959 0 2px, #545454 2px 4px);
  color: #000;
}
.tab {
  display: flex;
  gap: 13px;
  width: 110px;
  padding: 3px 0 0 7px;
  background: linear-gradient(#fff1c4, #ffe18f);
  white-space: nowrap;
}
.tab b {
  color: #1f4e79;
}
.tab .plain {
  height: 10px;
}
.add {
  padding: 0 7px 0 4px;
  border-right: 1px solid #333;
}
.close-all {
  margin-left: auto;
  padding: 0 5px;
  border-left: 1px solid #333;
}

.frame {
  flex: 1;
  min-height: 0;
  display: flex;
  flex-direction: column;
  border: solid #ffe39c;
  border-width: 2px 3px;
}
.split {
  flex: none;
  display: flex;
  justify-content: center;
  align-items: center;
  height: 11px;
}
.work {
  flex: 1;
  min-height: 0;
  display: grid;
  grid-template: minmax(0, 1fr) 15px / minmax(0, 1fr) 14px;
  border-top: 1px solid #555;
  border-bottom: 1px solid #777;
}
.doc {
  position: relative;
  display: flex;
  overflow: hidden;
  background: #fff;
  box-shadow: inset 0 1px 2px #999;
  color: #222;
  font: 7px/10px "Liberation Sans", Arial, sans-serif;
}
.doc p,
.doc h2,
.doc h3,
.doc h4 {
  margin: 0;
  white-space: nowrap;
}
.doc h3,
.doc h4 {
  font-size: 7px;
  color: #111;
}
.doc b {
  color: #111;
}
.sheet {
  flex: none;
}
.one {
  width: 612px;
  border-right: 1px solid #000;
}
.one h2 {
  padding: 15px 0 158px;
  font-size: 14px;
  line-height: 16px;
  text-align: center;
  color: #000;
}
.card {
  background: #feeed3;
  white-space: nowrap;
}
.language {
  width: 354px;
  height: 61px;
  margin-left: 34px;
  padding: 1px 0 0 5px;
}
.lang-row {
  display: flex;
  align-items: center;
  height: 21px;
  padding-left: 14px;
}
.lang-row + .lang-row {
  height: 27px;
  margin: 2px 9px 0 0;
  background: repeating-linear-gradient(90deg, #b3a99c 0 18px, transparent 18px 23px) 0 0 / 100% 1px no-repeat;
}
.lang {
  flex: none;
  width: 68px;
}
.opt {
  flex: none;
  display: flex;
  align-items: center;
  gap: 2px;
  width: 59px;
}
.opt input {
  appearance: none;
  flex: none;
  width: 13px;
  height: 13px;
  border: 2px solid #000;
  background: linear-gradient(#ddd, #ddd) 4px 5px / 1px 4px no-repeat #333;
}
.opt.blank input {
  background: #333;
}
.other {
  display: flex;
  align-items: center;
  gap: 4px;
  margin-left: -6px;
}
.field {
  flex: none;
  display: flex;
  height: 19px;
  overflow: hidden;
  border: 2px solid #000;
  background: #fff;
}
.field input {
  field-sizing: content;
  height: 17px;
  padding: 0 2px;
  border: 0;
  outline: 0;
  border-radius: 0;
  background: #333;
  color: #fff;
  font: 12px/17px "Noto Sans", "Open Sans", sans-serif;
}
.mid {
  justify-content: center;
}
.other .field {
  width: 130px;
}
.two {
  display: flex;
  align-items: stretch;
  gap: 23px;
  height: 120px;
  margin: 5px 0 0 34px;
}
.two .card {
  width: 252px;
  padding: 2px 5px;
}
.num {
  display: flex;
}
.num > b:first-child {
  width: 14px;
}
.name {
  display: flex;
  justify-content: space-between;
  align-items: center;
  height: 21px;
  padding: 0 2px 0 14px;
}
.name .field {
  width: 179px;
}
.sex {
  align-items: center;
  height: 18px;
}
.sex .opt {
  width: 46px;
}
.q {
  width: 70px;
}
.birth {
  align-items: center;
  height: 20px;
}
.dob {
  display: grid;
  grid-template: 6px 12px / 20px 22px 40px;
  border: 1px solid #000;
  background: #fff;
  font-size: 5px;
  line-height: 6px;
  text-align: center;
}
.dob .cut {
  text-align: left;
}
.dob input {
  min-width: 0;
  width: 100%;
  padding: 0;
  border: 2px solid #000;
  border-radius: 0;
  background: #333;
}
.two .edu {
  padding: 4px 5px;
}
.edu h3 span {
  display: inline-block;
  width: 14px;
}
.years {
  display: flex;
  justify-content: space-between;
  height: 29px;
  padding: 0 1px 0 15px;
}
.years p {
  line-height: 12px;
}
.years p:first-child {
  padding-top: 2px;
}
.years .field {
  justify-content: center;
  width: 43px;
  margin-top: -3px;
}
.levels {
  display: grid;
  grid-template-columns: 109px 100px;
  padding-left: 13px;
}
.levels .opt {
  width: auto;
  gap: 3px;
}

.second {
  width: 260px;
  padding: 29px 0 0 37px;
}
.second hr {
  margin: 0 0 0 -1px;
  border: 0;
  border-top: 1px solid #222;
}
.second h3 {
  padding: 3px 0 8px 17px;
  font-size: 8px;
}
.para {
  width: 172px;
  padding-left: 17px;
  font-size: 8px;
}
.para p {
  line-height: 9px;
  text-align-last: justify;
}
.para .strong {
  font-weight: 700;
  color: #000;
}
.para .start {
  text-align-last: left;
}
.second h4 {
  padding: 3px 0 0 151px;
  line-height: 6px;
}
.family {
  height: 300px;
  padding-top: 5px;
  background: #feeed3;
}
.row {
  display: flex;
  align-items: center;
  gap: 9px;
  min-height: 20px;
}
.row.in {
  gap: 34px;
}
.lab {
  flex: none;
  width: 106px;
  padding: 3px 0;
  line-height: 8px;
  text-align: right;
  white-space: nowrap;
}
.row.place {
  min-height: 30px;
  align-items: flex-end;
}
.place .lab {
  padding: 0 0 2px;
  line-height: 12px;
}
.row .field {
  width: 61px;
}
.row .field input {
  flex: 1;
  min-width: 0;
}
.field.wide {
  padding-left: 17px;
}
.row .field.mid {
  padding-left: 11px;
}
.field.thin {
  padding-left: 8px;
}
.guide-v {
  position: absolute;
  left: 67px;
  top: 0;
  bottom: 0;
  width: 1px;
  background: repeating-linear-gradient(#8fcbe0 0 4px, transparent 4px 6px);
}
.guide-h {
  position: absolute;
  left: 0;
  right: 0;
  top: 55px;
  height: 1px;
  background: repeating-linear-gradient(90deg, #8fcbe0 0 4px, transparent 4px 6px);
}
.placing {
  position: absolute;
  left: 67px;
  top: 55px;
  width: 150px;
  height: 32px;
  border: 3px solid #70b3ea;
  background: #bbdbf8;
}

.vbar,
.hbar {
  display: flex;
}
.vbar {
  flex-direction: column;
  border-left: 1px solid #666;
}
.hbar {
  border-top: 1px solid #666;
}
.vbar button,
.hbar button {
  flex: none;
  display: grid;
  place-items: center;
  width: 14px;
  height: 14px;
  padding: 0;
  border: 1px solid #bbb;
  background: #f6f6f6;
}
.vbar .thumb,
.hbar .thumb {
  border: 1px solid #8a8a8a;
  border-radius: 2px;
}
.vbar .thumb {
  flex: 43;
  background: repeating-linear-gradient(#666 0 1px, transparent 1px 3px) center / 6px 7px no-repeat, linear-gradient(90deg, #fafafa, #e8e8e8);
}
.vbar .track {
  flex: 57;
}
.hbar .thumb {
  flex: 67;
  background: repeating-linear-gradient(90deg, #666 0 1px, transparent 1px 2px) center / 6px 6px no-repeat, linear-gradient(#fafafa, #ececec);
}
.hbar .track {
  flex: 33;
}
.track {
  background: #c2c2c2;
}

.status {
  flex: none;
  display: flex;
  align-items: center;
  height: 30px;
  padding-left: 1px;
}
.status .grip {
  padding: 4px 0 2px;
}
.status > .pair {
  padding: 0 2px;
}
.status > .sep {
  margin: 3px;
}
.space {
  flex: 1;
}
.more {
  padding: 0 3px;
}
.nav {
  width: 28px;
  display: grid;
  place-items: center;
}
.page-box {
  display: flex;
  align-items: center;
  width: 90px;
  height: 24px;
  margin: 0 1px;
  padding: 0 4px;
  border: 1px solid #a2a2a2;
  border-radius: 3px;
  background: #fff;
  box-shadow: inset 0 0 0 1px #dcdcdc;
  font-size: 12px;
}
.page-box input {
  flex: 1;
  min-width: 0;
  padding: 0;
  border: 0;
  outline: 0;
  background: none;
  text-align: right;
}
.page-box sup {
  font-size: 8px;
  line-height: 8px;
  color: #1f4e79;
}
.zoom-box {
  width: 82px;
}
.slider {
  appearance: none;
  width: 100px;
  height: 24px;
  margin: 0 3px 0 2px;
  background: linear-gradient(#666, #666) center / 100% 1px no-repeat, linear-gradient(#666, #666) 49px center / 1px 5px no-repeat;
}
.slider::-webkit-slider-thumb {
  appearance: none;
  width: 7px;
  height: 24px;
  border: 1px solid #777;
  border-radius: 2px;
  background: #fff;
}
.last {
  padding: 0 5px 0 13px;
}
.status .edge {
  margin-left: 0;
  padding-right: 0;
}
</style>
